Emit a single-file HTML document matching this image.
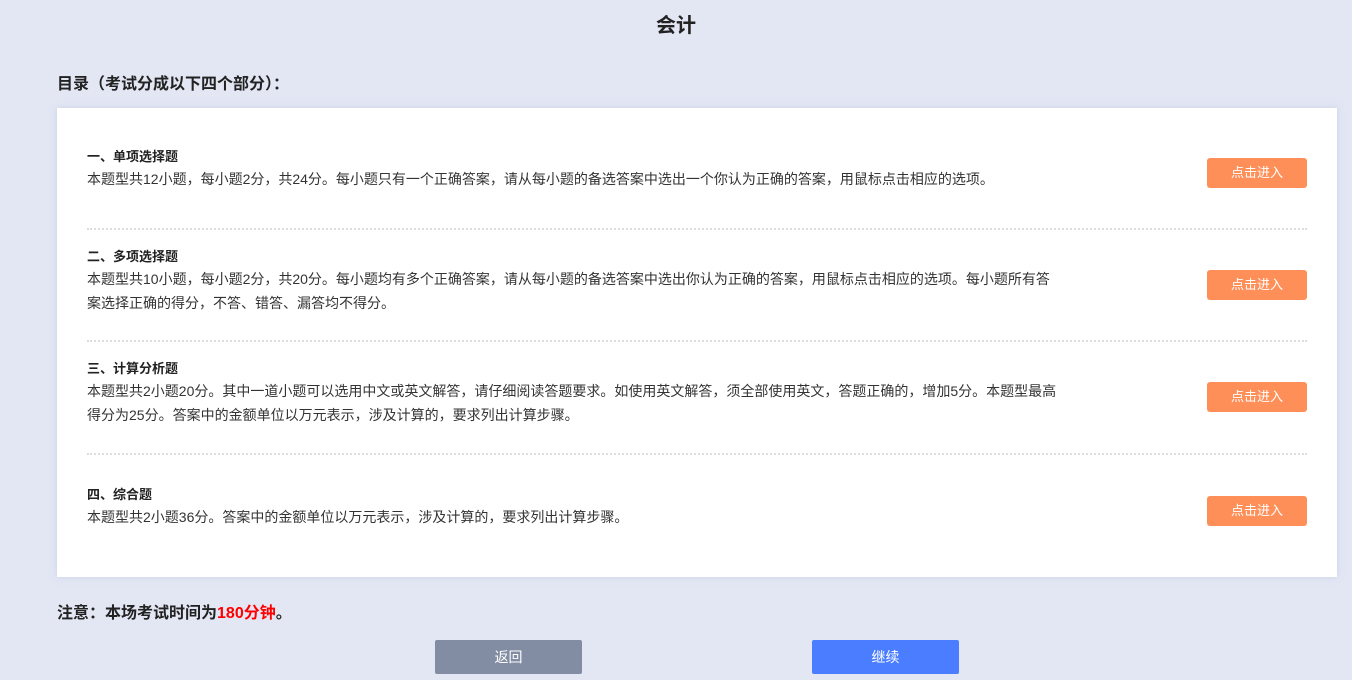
<!DOCTYPE html>
<html><head><meta charset="utf-8"><style>
*{margin:0;padding:0;box-sizing:border-box}
body{width:1352px;height:680px;background:#e3e7f4;font-family:"Liberation Sans","Noto Sans CJK SC",sans-serif;position:relative;overflow:hidden;color:#222}
.abs{position:absolute}
h1{position:absolute;left:0;width:1352px;top:9px;text-align:center;font-size:20px;font-weight:bold;color:#222}
.toc{left:57px;top:70px;font-size:16px;font-weight:bold}
.card{left:57px;top:108px;width:1280px;height:469px;background:#fff;box-shadow:0 0 6px rgba(180,190,220,.5)}
.t{left:87px;font-size:13px;font-weight:bold;color:#222}
.d{left:87px;font-size:14px;line-height:24px;color:#333;width:975px}
.hr{left:87px;width:1220px;border-top:2px dotted #ddd;height:0}
.btn{left:1207px;width:100px;height:30px;background:#ff8f59;color:#fff;font-size:13px;text-align:center;line-height:30px;border-radius:3px}
.note{left:57px;top:599px;font-size:16px;font-weight:bold}
.note span{color:#f00}
.bb{top:640px;width:147px;height:34px;color:#fff;font-size:14px;text-align:center;line-height:34px;border-radius:2px}
</style></head><body>
<h1>会计</h1>
<div class="abs toc">目录（考试分成以下四个部分）：</div>
<div class="abs card"></div>
<div class="abs t" style="top:146px">一、单项选择题</div>
<div class="abs d" style="top:167px">本题型共12小题，每小题2分，共24分。每小题只有一个正确答案，请从每小题的备选答案中选出一个你认为正确的答案，用鼠标点击相应的选项。</div>
<div class="abs btn" style="top:158px">点击进入</div>
<div class="abs hr" style="top:228px"></div>
<div class="abs t" style="top:246px">二、多项选择题</div>
<div class="abs d" style="top:267px">本题型共10小题，每小题2分，共20分。每小题均有多个正确答案，请从每小题的备选答案中选出你认为正确的答案，用鼠标点击相应的选项。每小题所有答案选择正确的得分，不答、错答、漏答均不得分。</div>
<div class="abs btn" style="top:270px">点击进入</div>
<div class="abs hr" style="top:340px"></div>
<div class="abs t" style="top:358px">三、计算分析题</div>
<div class="abs d" style="top:379px">本题型共2小题20分。其中一道小题可以选用中文或英文解答，请仔细阅读答题要求。如使用英文解答，须全部使用英文，答题正确的，增加5分。本题型最高得分为25分。答案中的金额单位以万元表示，涉及计算的，要求列出计算步骤。</div>
<div class="abs btn" style="top:382px">点击进入</div>
<div class="abs hr" style="top:453px"></div>
<div class="abs t" style="top:484px">四、综合题</div>
<div class="abs d" style="top:505px">本题型共2小题36分。答案中的金额单位以万元表示，涉及计算的，要求列出计算步骤。</div>
<div class="abs btn" style="top:496px">点击进入</div>
<div class="abs note">注意：本场考试时间为<span>180分钟</span>。</div>
<div class="abs bb" style="left:435px;background:#828ca3">返回</div>
<div class="abs bb" style="left:812px;background:#4a7dff">继续</div>
</body></html>
